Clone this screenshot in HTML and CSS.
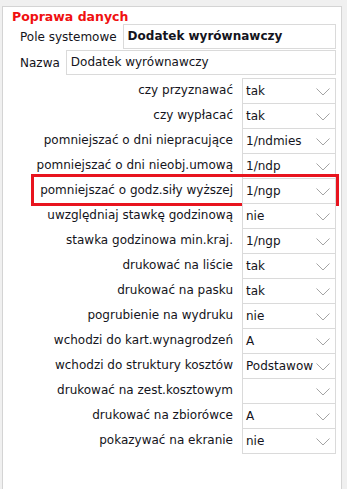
FILE: index.html
```html
<!DOCTYPE html>
<html lang="pl">
<head>
<meta charset="utf-8">
<title>Poprawa danych</title>
<link rel="stylesheet" href="styles.css">
</head>
<body>
<div class="panel">
  <div class="title">Poprawa danych</div>
  <div class="top-row">
    <span class="top-label">Pole systemowe</span>
    <div class="field bold">Dodatek wyrównawczy</div>
  </div>
  <div class="top-row second">
    <span class="top-label">Nazwa</span>
    <div class="field">Dodatek wyrównawczy</div>
  </div>
  <div class="rows">
    <div class="row"><span class="label">czy przyznawać</span><div class="select"><span class="value">tak</span><svg class="chev" width="14" height="8" viewBox="0 0 14 8"><polyline points="0.5,0.5 7,7 13.5,0.5"/></svg></div></div>
    <div class="row"><span class="label">czy wypłacać</span><div class="select"><span class="value">tak</span><svg class="chev" width="14" height="8" viewBox="0 0 14 8"><polyline points="0.5,0.5 7,7 13.5,0.5"/></svg></div></div>
    <div class="row"><span class="label">pomniejszać o dni niepracujące</span><div class="select"><span class="value">1/ndmies</span><svg class="chev" width="14" height="8" viewBox="0 0 14 8"><polyline points="0.5,0.5 7,7 13.5,0.5"/></svg></div></div>
    <div class="row"><span class="label">pomniejszać o dni nieobj.umową</span><div class="select"><span class="value">1/ndp</span><svg class="chev" width="14" height="8" viewBox="0 0 14 8"><polyline points="0.5,0.5 7,7 13.5,0.5"/></svg></div></div>
    <div class="row highlighted"><span class="label">pomniejszać o godz.siły wyższej</span><div class="select"><span class="value">1/ngp</span><svg class="chev" width="14" height="8" viewBox="0 0 14 8"><polyline points="0.5,0.5 7,7 13.5,0.5"/></svg></div></div>
    <div class="row"><span class="label">uwzględniaj stawkę godzinową</span><div class="select"><span class="value">nie</span><svg class="chev" width="14" height="8" viewBox="0 0 14 8"><polyline points="0.5,0.5 7,7 13.5,0.5"/></svg></div></div>
    <div class="row"><span class="label">stawka godzinowa min.kraj.</span><div class="select"><span class="value">1/ngp</span><svg class="chev" width="14" height="8" viewBox="0 0 14 8"><polyline points="0.5,0.5 7,7 13.5,0.5"/></svg></div></div>
    <div class="row"><span class="label">drukować na liście</span><div class="select"><span class="value">tak</span><svg class="chev" width="14" height="8" viewBox="0 0 14 8"><polyline points="0.5,0.5 7,7 13.5,0.5"/></svg></div></div>
    <div class="row"><span class="label">drukować na pasku</span><div class="select"><span class="value">tak</span><svg class="chev" width="14" height="8" viewBox="0 0 14 8"><polyline points="0.5,0.5 7,7 13.5,0.5"/></svg></div></div>
    <div class="row"><span class="label">pogrubienie na wydruku</span><div class="select"><span class="value">nie</span><svg class="chev" width="14" height="8" viewBox="0 0 14 8"><polyline points="0.5,0.5 7,7 13.5,0.5"/></svg></div></div>
    <div class="row"><span class="label">wchodzi do kart.wynagrodzeń</span><div class="select"><span class="value">A</span><svg class="chev" width="14" height="8" viewBox="0 0 14 8"><polyline points="0.5,0.5 7,7 13.5,0.5"/></svg></div></div>
    <div class="row"><span class="label">wchodzi do struktury kosztów</span><div class="select"><span class="value">Podstawow</span><svg class="chev" width="14" height="8" viewBox="0 0 14 8"><polyline points="0.5,0.5 7,7 13.5,0.5"/></svg></div></div>
    <div class="row"><span class="label">drukować na zest.kosztowym</span><div class="select"><span class="value"></span><svg class="chev" width="14" height="8" viewBox="0 0 14 8"><polyline points="0.5,0.5 7,7 13.5,0.5"/></svg></div></div>
    <div class="row"><span class="label">drukować na zbiorówce</span><div class="select"><span class="value">A</span><svg class="chev" width="14" height="8" viewBox="0 0 14 8"><polyline points="0.5,0.5 7,7 13.5,0.5"/></svg></div></div>
    <div class="row"><span class="label">pokazywać na ekranie</span><div class="select"><span class="value">nie</span><svg class="chev" width="14" height="8" viewBox="0 0 14 8"><polyline points="0.5,0.5 7,7 13.5,0.5"/></svg></div></div>
  </div>
</div>
</body>
</html>
```

FILE: styles.css
```css
html, body {
  margin: 0;
  padding: 0;
  background: #f0f0f0;
  overflow: hidden;
}
body {
  font-family: "DejaVu Sans", Verdana, sans-serif;
  font-size: 12px;
  color: #141420;
  height: 489px;
}
.panel {
  box-sizing: border-box;
  margin: 6px 0 0 2px;
  width: 340px;
  height: 483px;
  background: #fff;
  border: 1px solid #d4d4d4;
  border-bottom: none;
  padding: 0 5px 0 0;
}
.title {
  color: #f01010;
  font-weight: bold;
  font-size: 12.5px;
  line-height: 14px;
  margin: 3px 0 0 9px;
}
.top-row {
  display: flex;
  align-items: center;
  padding-left: 17px;
  height: 25px;
}
.top-row.second {
  margin-top: 1px;
}
.top-label {
  margin-right: 6px;
  white-space: nowrap;
}
.field {
  flex: 1;
  box-sizing: border-box;
  height: 25px;
  line-height: 23px;
  border: 1px solid #dadada;
  padding-left: 4px;
  white-space: nowrap;
}
.field.bold {
  font-weight: bold;
}
.rows {
  margin-top: 3px;
}
.row {
  display: flex;
  height: 25px;
  position: relative;
}
.label {
  flex: 1;
  text-align: right;
  line-height: 25px;
  padding-right: 9px;
  white-space: nowrap;
}
.select {
  box-sizing: border-box;
  width: 94px;
  height: 26px;
  border: 1px solid #dadada;
  display: flex;
  align-items: center;
  padding: 0 5px 0 3px;
  background: #fff;
}
.value {
  flex: 1;
  white-space: nowrap;
  line-height: 24px;
  min-width: 0;
  margin-right: 2px;
}
.chev {
  flex: none;
  display: block;
  margin-top: 1px;
}
.chev polyline {
  fill: none;
  stroke: #a4a4a4;
  stroke-width: 1;
}
.row.highlighted::after {
  content: "";
  position: absolute;
  left: 28px;
  top: -4px;
  width: 308px;
  height: 32px;
  box-sizing: border-box;
  border: 3px solid #e8141e;
  pointer-events: none;
}
```
